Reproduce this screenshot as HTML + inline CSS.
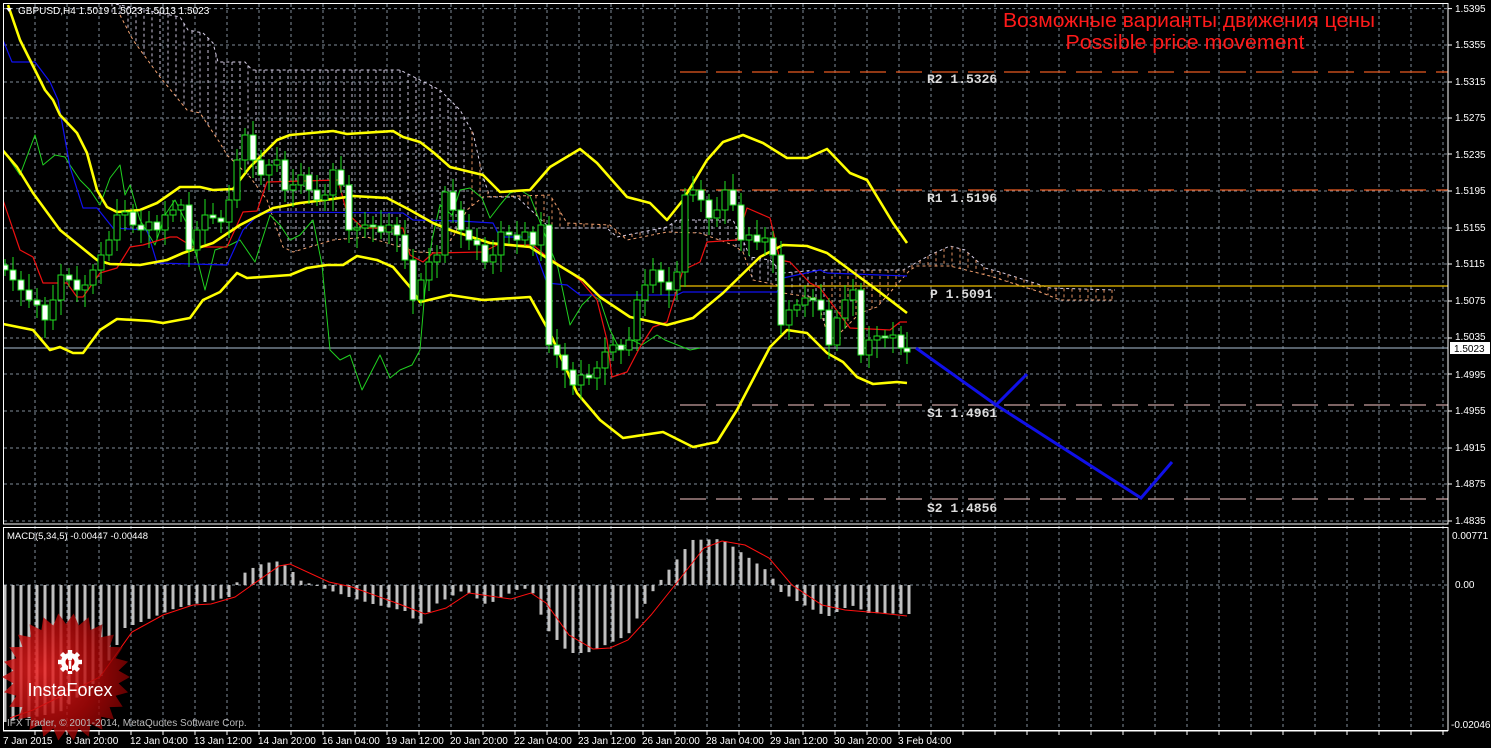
<!DOCTYPE html>
<html><head><meta charset="utf-8"><style>
html,body{margin:0;padding:0;background:#000;width:1491px;height:748px;overflow:hidden}
svg{display:block}
text{font-family:"Liberation Sans",sans-serif}
.ax{fill:#fff;font-size:10px}
.pv{fill:#ddd;font-family:"Liberation Mono",monospace;font-size:13px;font-weight:bold}
</style></head><body>
<svg id="s" width="1491" height="748" viewBox="0 0 1491 748" xmlns="http://www.w3.org/2000/svg">
<defs>
<radialGradient id="lg" cx="0.3" cy="0.45" r="0.75"><stop offset="0" stop-color="#f02020"/><stop offset="0.6" stop-color="#b00808"/><stop offset="1" stop-color="#700000"/></radialGradient>
<clipPath id="mainclip"><rect x="4" y="4" width="1444" height="520"/></clipPath>
<clipPath id="macdclip"><rect x="4" y="528" width="1444" height="202"/></clipPath>
</defs>
<g id="grid"></g>
<g id="cloud" clip-path="url(#mainclip)"></g>
<g stroke-dasharray="26,10" stroke-width="1.3">
<line x1="680" y1="72" x2="1448" y2="72" stroke="#e85a20"/>
<line x1="680" y1="190" x2="1448" y2="190" stroke="#e85a20"/>
<line x1="680" y1="405" x2="1448" y2="405" stroke="#c8a0a0"/>
<line x1="680" y1="499" x2="1448" y2="499" stroke="#c8a0a0"/>
</g>
<line x1="680" y1="286" x2="1448" y2="286" stroke="#f0c000" stroke-width="1.3"/>
<line x1="4" y1="348" x2="1448" y2="348" stroke="#8a9aaa" stroke-width="1.3"/>
<g id="lines" clip-path="url(#mainclip)" fill="none"></g>
<g id="candles" clip-path="url(#mainclip)"></g>
<g id="macd" clip-path="url(#macdclip)"></g>
<polyline points="916,348 996,405 1027,374" fill="none" stroke="#1010e8" stroke-width="3"/>
<polyline points="996,405 1141,498 1172,462" fill="none" stroke="#1010e8" stroke-width="3"/>
<text class="pv" x="927" y="83">R2 1.5326</text>
<text class="pv" x="927" y="202">R1 1.5196</text>
<text class="pv" x="930" y="298">P 1.5091</text>
<text class="pv" x="927" y="417">S1 1.4961</text>
<text class="pv" x="927" y="512">S2 1.4856</text>
<text x="1189" y="27" fill="#ff1a1a" font-size="20" text-anchor="middle" textLength="372" lengthAdjust="spacingAndGlyphs">Возможные варианты движения цены</text>
<text x="1185" y="49" fill="#ff1a1a" font-size="20" text-anchor="middle" textLength="239" lengthAdjust="spacingAndGlyphs">Possible price movement</text>
<rect x="3.5" y="3.5" width="1444.5" height="520.5" fill="none" stroke="#fff" stroke-width="1"/>
<rect x="3.5" y="527.5" width="1444.5" height="203" fill="none" stroke="#fff" stroke-width="1"/>
<path d="M6,8 L12,8 L9,12 Z" fill="#fff"/>
<text x="18" y="14" fill="#fff" font-size="10">GBPUSD,H4  1.5019 1.5023 1.5013 1.5023</text>
<text x="7" y="539" fill="#fff" font-size="9.5">MACD(5,34,5) -0.00447 -0.00448</text>
<g opacity="0.82"><polygon id="star" fill="url(#lg)"/></g>
<g fill="#fff" transform="translate(70,662)">
<circle r="9"/><g id="teeth"></g>
<circle r="4.5" fill="#b00"/>
<rect x="-2" y="-3" width="4" height="12" fill="#b00"/>
<rect x="-1.3" y="-1" width="2.6" height="8" fill="#fff"/>
<circle cy="-3.5" r="2.3" fill="#fff"/>
</g>
<text x="70" y="696" fill="#fff" font-size="18" text-anchor="middle">InstaForex</text>
<text x="7" y="726" fill="#bbb" font-size="10">IFX Trader, © 2001-2014, MetaQuotes Software Corp.</text>
<g class="ax">
<text x="1455" y="12">1.5395</text><text x="1455" y="48">1.5355</text><text x="1455" y="85">1.5315</text>
<text x="1455" y="121">1.5275</text><text x="1455" y="158">1.5235</text><text x="1455" y="194">1.5195</text>
<text x="1455" y="231">1.5155</text><text x="1455" y="267">1.5115</text><text x="1455" y="304">1.5075</text>
<text x="1455" y="340">1.5035</text><text x="1455" y="378">1.4995</text><text x="1455" y="414">1.4955</text>
<text x="1455" y="451">1.4915</text><text x="1455" y="487">1.4875</text><text x="1455" y="524">1.4835</text>
<text x="1452" y="539">0.00771</text><text x="1455" y="588">0.00</text><text x="1451" y="728">-0.02046</text>
</g>
<rect x="1450" y="342" width="40" height="12" fill="#fff"/>
<text x="1454" y="352" fill="#000" font-size="10">1.5023</text>
<g class="ax">
<text x="3" y="744">7 Jan 2015</text><text x="66" y="744">8 Jan 20:00</text><text x="130" y="744">12 Jan 04:00</text>
<text x="194" y="744">13 Jan 12:00</text><text x="258" y="744">14 Jan 20:00</text><text x="322" y="744">16 Jan 04:00</text>
<text x="386" y="744">19 Jan 12:00</text><text x="450" y="744">20 Jan 20:00</text><text x="514" y="744">22 Jan 04:00</text>
<text x="578" y="744">23 Jan 12:00</text><text x="642" y="744">26 Jan 20:00</text><text x="706" y="744">28 Jan 04:00</text>
<text x="770" y="744">29 Jan 12:00</text><text x="834" y="744">30 Jan 20:00</text><text x="898" y="744">3 Feb 04:00</text>
</g>
</svg>
<script>
var NS="http://www.w3.org/2000/svg";
function el(p,t,a){var e=document.createElementNS(NS,t);for(var k in a)e.setAttribute(k,a[k]);p.appendChild(e);return e;}
var g=document.getElementById('grid');
var hy=[8.6,45,82,118,154,191,228,264,301,338,374,411,448,484,521];
for(var x=35;x<1448;x+=32){el(g,'line',{x1:x,y1:4,x2:x,y2:731,stroke:'#7f8b99','stroke-dasharray':'3,3','stroke-width':1});
 el(g,'line',{x1:x,y1:731,x2:x,y2:735,stroke:'#fff'});}
hy.forEach(function(y){el(g,'line',{x1:4,y1:y,x2:1448,y2:y,stroke:'#7f8b99','stroke-dasharray':'3,3','stroke-width':1});el(g,'line',{x1:1448,y1:y,x2:1452,y2:y,stroke:'#fff'});});
el(g,'line',{x1:4,y1:585,x2:1448,y2:585,stroke:'#7f8b99','stroke-dasharray':'3,3'});
el(g,'line',{x1:3,y1:731,x2:1448,y2:731,stroke:'#fff'});
function interp(pts,x){if(x<=pts[0][0])return pts[0][1];for(var i=1;i<pts.length;i++){if(x<=pts[i][0]){var a=pts[i-1],b=pts[i];return a[1]+(b[1]-a[1])*(x-a[0])/(b[0]-a[0]);}}return pts[pts.length-1][1];}
function P(s){return s.trim().split(/\s+/).map(function(q){return q.split(',').map(Number);});}
function ptsStr(a){return a.map(function(p){return p.join(',')}).join(' ');}
var top_=P("110,3 180,17 188,30 203,33 213,43 218,62 245,62 252,70 400,70 440,90 460,110 473,133 483,177 490,197 517,197 550,228 607,228 617,237 667,227 677,220 733,220 743,240 750,257 770,260 783,273 817,270 903,270 930,255 950,246 965,250 985,268 1000,272 1050,288 1115,290");
var bot_=P("120,15 133,40 160,77 187,110 200,113 220,143 227,155 250,177 267,200 283,247 293,252 333,240 367,237 417,252 440,253 453,237 467,210 483,197 550,195 567,223 610,225 627,240 667,232 700,233 733,245 743,252 753,280 777,285 783,293 817,298 827,333 840,333 860,313 877,307 910,270 917,266 950,266 990,276 1040,292 1060,300 1115,300");
var cg=document.getElementById('cloud');
el(cg,'polyline',{points:ptsStr(top_),fill:'none',stroke:'#d8d0e8','stroke-dasharray':'3,3'});
el(cg,'polyline',{points:ptsStr(bot_),fill:'none',stroke:'#f0a070','stroke-dasharray':'3,3'});
for(var x=112;x<1115;x+=8){var a=interp(top_,x),b=interp(bot_,x);var col=(x<470||(x>640&&x<830))?'#c8c0d8':'#e09060';
 el(cg,'line',{x1:x,y1:Math.min(a,b),x2:x,y2:Math.max(a,b),stroke:col,'stroke-dasharray':'3,3','stroke-width':1});}
var lg=document.getElementById('lines');
function pl(s,c,w){el(lg,'polyline',{points:ptsStr(P(s)),stroke:c,'stroke-width':w,'stroke-linejoin':'round'});}
pl("3,150 20,175 35,135 43,165 55,155 65,157 70,165 80,180 90,190 100,205 110,178 120,165 125,195 130,185 140,220 155,245 165,215 175,200 190,230 205,290 215,250 230,245 240,240 255,262 270,215 280,225 290,240 300,235 313,220 322,265 330,350 340,360 350,355 362,390 380,355 390,378 400,370 412,365 420,350 425,290 432,240 440,205 452,215 460,190 470,188 482,198 490,218 500,205 510,193 520,190 530,196 545,235 558,268 570,325 582,305 592,295 600,300 610,330 620,350 632,340 642,345 657,335 665,340 690,350 700,348","#20d020",1);
pl("3,40 12,62 35,62 50,82 58,100 70,167 83,208 97,208 113,228 147,230 157,263 227,265 243,230 260,213 277,212 403,213 413,220 460,221 493,223 500,237 530,237 547,283 567,285 580,295 677,295 683,292 777,292 783,278 820,270 827,273 907,276","#1010f0",1.2);
pl("3,200 20,250 33,257 43,283 67,283 77,297 83,297 100,273 117,268 130,247 143,245 170,237 177,237 193,247 227,247 243,212 257,211 267,182 338,180 347,213 363,228 403,228 410,255 423,262 433,253 483,252 497,245 533,245 545,255 560,265 580,280 597,300 607,340 612,377 627,372 640,347 653,327 667,322 683,270 700,262 707,242 737,240 747,208 770,218 780,260 790,262 810,283 820,288 850,328 890,330 900,322 907,322","#ee1010",1.2);
pl("8,5 20,40 35,70 45,90 53,100 60,115 77,133 87,153 97,190 107,207 117,212 140,210 157,203 180,187 200,187 213,190 233,189 250,167 277,140 290,135 333,131 347,134 393,131 403,137 420,142 433,152 450,167 483,175 500,192 530,190 550,167 580,149 597,163 627,197 650,203 667,220 683,200 707,160 723,142 743,135 763,143 787,158 807,158 827,149 850,173 867,180 893,223 907,243","#ffff00",2.6);
pl("0,147 17,167 33,193 60,230 97,260 110,264 140,265 167,260 183,253 213,243 240,225 273,208 300,203 333,199 353,196 387,198 410,210 433,223 450,230 490,243 530,247 550,260 583,280 600,297 630,317 667,325 693,318 723,293 760,257 783,245 807,246 827,253 850,270 877,290 907,313","#ffff00",2.6);
pl("3,324 33,330 50,350 60,347 73,353 83,353 100,330 117,319 150,321 163,323 190,318 203,300 220,292 237,273 247,278 290,275 307,268 327,265 343,265 357,256 377,260 393,267 410,287 420,302 450,295 483,300 530,297 550,333 577,393 600,420 623,438 663,432 693,447 717,442 737,410 770,347 787,330 807,333 827,353 843,362 857,377 873,384 897,382 907,383","#ffff00",2.6);
var cl=P("5,270 13,280 21,290 29,300 37,305 45,320 53,300 61,275 69,280 77,290 85,285 93,270 101,255 109,240 117,215 125,212 133,225 141,230 149,222 157,230 165,215 173,210 181,205 189,250 197,230 205,215 213,218 221,222 229,200 237,160 245,135 253,160 261,175 269,165 277,160 285,190 293,185 301,175 309,190 317,200 325,195 333,170 341,185 349,230 357,228 365,225 373,226 381,232 389,225 397,235 405,260 413,300 421,280 429,262 437,255 445,192 453,210 461,230 469,240 477,245 485,262 493,255 501,232 509,235 517,240 525,232 533,245 541,225 549,345 557,355 565,370 573,385 581,375 589,378 597,368 605,352 613,345 621,350 629,340 637,300 645,285 653,270 661,282 669,290 677,272 685,195 693,190 701,200 709,218 717,210 725,190 733,205 741,240 749,235 757,242 765,238 773,255 781,325 789,310 797,305 805,298 813,300 821,310 829,345 837,318 845,300 853,290 861,355 869,340 877,336 885,338 893,335 901,348 907,352");
var cd=document.getElementById('candles');var prev=265;
cl.forEach(function(c,i){var x=c[0],o=prev,cv=c[1];if(Math.abs(o-cv)<2)cv=o+2;var t=Math.min(o,cv),b=Math.max(o,cv);var hw=6+((i*7)%11),lw=6+((i*5)%13);
 el(cd,'line',{x1:x,y1:t-hw,x2:x,y2:b+lw,stroke:'#20e020','stroke-width':1});
 el(cd,'rect',{x:x-3,y:t,width:6,height:b-t,fill:cv>o?'#fff':'#000',stroke:'#20e020','stroke-width':1});prev=c[1];});
var hb=P("5,722 30,718 60,712 100,678 117,645 125,628 141,622 176,608 205,602 229,597 241,575 258,565 276,561 290,568 299,580 323,588 352,598 373,604 405,611 420,625 434,605 464,590 487,605 516,590 531,588 546,628 569,653 587,653 610,643 628,635 646,602 657,585 675,562 692,540 722,539 745,555 769,572 781,592 804,605 827,617 851,605 869,613 909,614");
var mg=document.getElementById('macd');
for(var x=5;x<=909;x+=8){var y=interp(hb,x);el(mg,'rect',{x:x-1.5,y:Math.min(y,585),width:3,height:Math.max(1,Math.abs(y-585)),fill:'#c0c0c0'});}
el(mg,'polyline',{points:ptsStr(P("10,718 33,710 100,677 132,632 163,615 193,605 211,604 235,597 252,585 279,566 290,564 329,582 352,587 399,604 425,614 446,608 469,593 511,599 531,593 546,603 569,635 593,649 610,648 628,640 651,615 675,585 704,548 722,541 745,545 769,558 792,585 822,605 845,610 880,613 907,616")),fill:'none',stroke:'#ff1010','stroke-width':1});
var s=[],n=26,cx=66,cy=677;for(var i=0;i<2*n;i++){var r=i%2?53:64,a=Math.PI*i/n;s.push((cx+r*Math.cos(a)).toFixed(1)+','+(cy+r*Math.sin(a)).toFixed(1));}
document.getElementById('star').setAttribute('points',s.join(' '));
var th=document.getElementById('teeth');for(var i=0;i<8;i++){el(th,'rect',{x:-2.2,y:-12,width:4.4,height:4.5,transform:'rotate('+(i*45)+')'});}
</script>
</body></html>
